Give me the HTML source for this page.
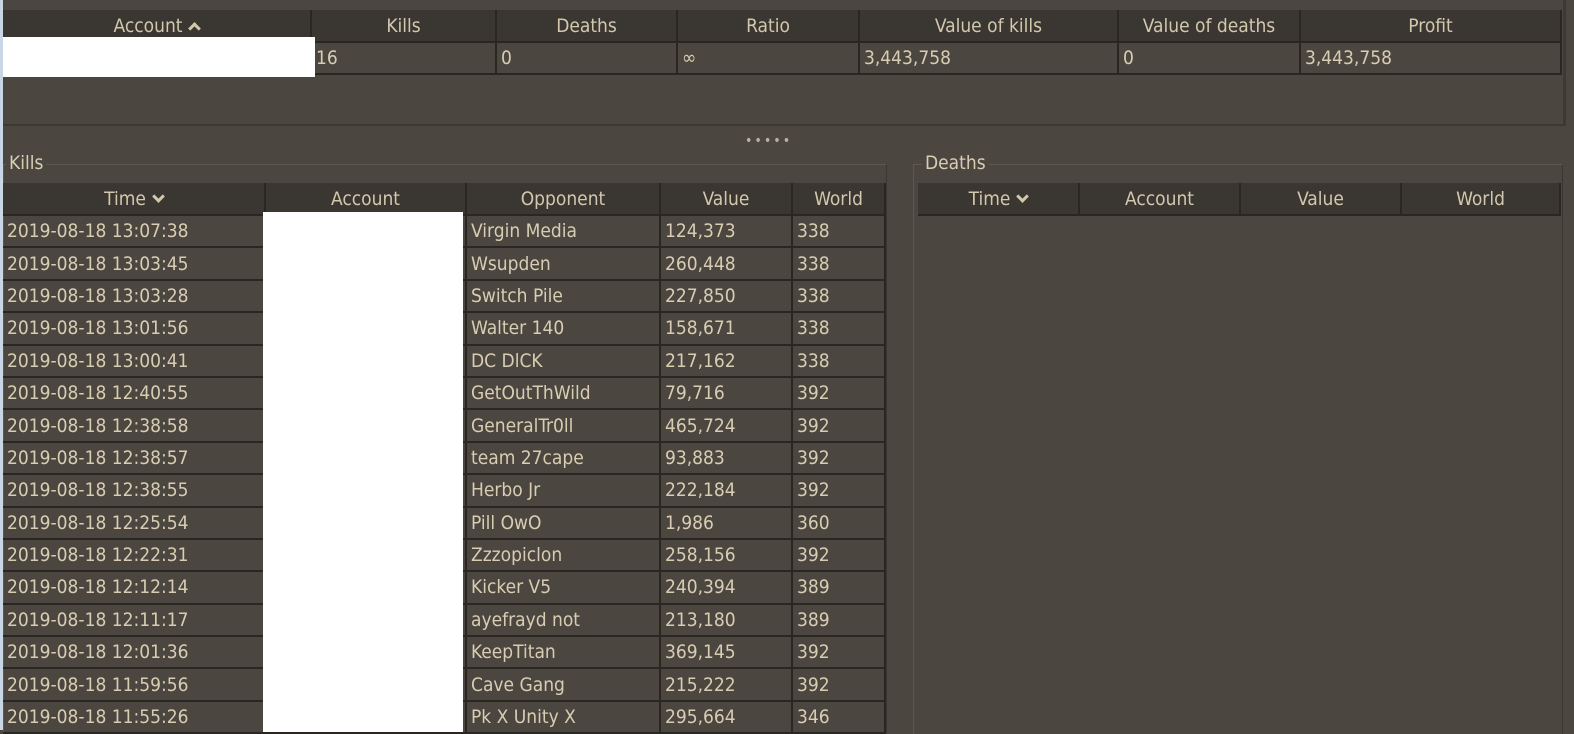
<!DOCTYPE html>
<html><head><meta charset="utf-8"><style>
*{margin:0;padding:0;box-sizing:border-box}
body{width:1574px;height:730px;overflow:hidden;background:#4b4740;font-family:"DejaVu Sans Condensed","Liberation Sans",sans-serif;font-size:19px;color:#d8cdb3;position:relative}
.a{position:absolute}
table{border-collapse:collapse;table-layout:fixed;position:absolute}
th{background:#3a3631;font-weight:normal;height:32px;border-right:2px solid #2a2722;border-bottom:2px solid #2a2722;text-align:center;color:#d3c8ae;white-space:nowrap}
td{height:32.4px;border-right:2px solid #2a2722;border-bottom:2px solid #2a2722;padding-left:4px;white-space:nowrap;overflow:hidden}
.grp{position:absolute;border:1px solid #5c5850;border-right-color:#3a3731;border-bottom:none}
.lbl{position:absolute;background:#4b4740;padding:0 3px}
.ch{display:inline-block;width:9px;height:9px;border-left:3px solid #d3c8ae;border-top:3px solid #d3c8ae;margin-left:8px;vertical-align:middle}
.up{transform:rotate(45deg);margin-top:4px}
.dn{transform:rotate(225deg);margin-top:-6px}
</style></head><body>
<div class="a" style="left:0;top:0;width:3px;height:730px;background:#c9d6e6"></div>
<div class="a" style="left:3px;top:124px;width:1560px;height:2px;background:#3d3a34"></div>
<div class="a" style="left:1563px;top:0;width:3px;height:126px;background:#3d3a34"></div>
<table style="left:3px;top:10px;width:1558px">
<colgroup><col style="width:308px"><col style="width:185px"><col style="width:181px"><col style="width:182px"><col style="width:259px"><col style="width:182px"><col style="width:261px"></colgroup>
<tr><th>Account<span class="ch up"></span></th><th>Kills</th><th>Deaths</th><th>Ratio</th><th>Value of kills</th><th>Value of deaths</th><th>Profit</th></tr>
<tr><td></td><td>16</td><td>0</td><td>∞</td><td>3,443,758</td><td>0</td><td>3,443,758</td></tr>
</table>
<div class="a" style="left:3px;top:37px;width:312px;height:40px;background:#fff"></div>
<div class="a" style="left:745px;top:133px;color:#b8b09e;font-size:14px;letter-spacing:2px">•••••</div>
<div class="grp" style="left:3px;top:164px;width:884px;height:570px"></div>
<div class="lbl" style="left:6px;top:152px">Kills</div>
<div class="grp" style="left:913px;top:164px;width:650px;height:570px"></div>
<div class="lbl" style="left:922px;top:152px">Deaths</div>
<table style="left:3px;top:183px;width:882px">
<colgroup><col style="width:262px"><col style="width:201px"><col style="width:194px"><col style="width:132px"><col style="width:93px"></colgroup>
<tr><th>Time<span class="ch dn"></span></th><th>Account</th><th>Opponent</th><th>Value</th><th>World</th></tr>
<tr><td>2019-08-18 13:07:38</td><td></td><td>Virgin Media</td><td>124,373</td><td>338</td></tr>
<tr><td>2019-08-18 13:03:45</td><td></td><td>Wsupden</td><td>260,448</td><td>338</td></tr>
<tr><td>2019-08-18 13:03:28</td><td></td><td>Switch Pile</td><td>227,850</td><td>338</td></tr>
<tr><td>2019-08-18 13:01:56</td><td></td><td>Walter 140</td><td>158,671</td><td>338</td></tr>
<tr><td>2019-08-18 13:00:41</td><td></td><td>DC DlCK</td><td>217,162</td><td>338</td></tr>
<tr><td>2019-08-18 12:40:55</td><td></td><td>GetOutThWild</td><td>79,716</td><td>392</td></tr>
<tr><td>2019-08-18 12:38:58</td><td></td><td>GeneralTr0ll</td><td>465,724</td><td>392</td></tr>
<tr><td>2019-08-18 12:38:57</td><td></td><td>team 27cape</td><td>93,883</td><td>392</td></tr>
<tr><td>2019-08-18 12:38:55</td><td></td><td>Herbo Jr</td><td>222,184</td><td>392</td></tr>
<tr><td>2019-08-18 12:25:54</td><td></td><td>Pill OwO</td><td>1,986</td><td>360</td></tr>
<tr><td>2019-08-18 12:22:31</td><td></td><td>Zzzopiclon</td><td>258,156</td><td>392</td></tr>
<tr><td>2019-08-18 12:12:14</td><td></td><td>Kicker V5</td><td>240,394</td><td>389</td></tr>
<tr><td>2019-08-18 12:11:17</td><td></td><td>ayefrayd not</td><td>213,180</td><td>389</td></tr>
<tr><td>2019-08-18 12:01:36</td><td></td><td>KeepTitan</td><td>369,145</td><td>392</td></tr>
<tr><td>2019-08-18 11:59:56</td><td></td><td>Cave Gang</td><td>215,222</td><td>392</td></tr>
<tr><td>2019-08-18 11:55:26</td><td></td><td>Pk X Unity X</td><td>295,664</td><td>346</td></tr>
</table>
<div class="a" style="left:263px;top:212px;width:200px;height:520px;background:#fff"></div>
<table style="left:918px;top:183px;width:642px">
<colgroup><col style="width:161px"><col style="width:161px"><col style="width:161px"><col style="width:159px"></colgroup>
<tr><th>Time<span class="ch dn"></span></th><th>Account</th><th>Value</th><th>World</th></tr>
</table>
</body></html>
